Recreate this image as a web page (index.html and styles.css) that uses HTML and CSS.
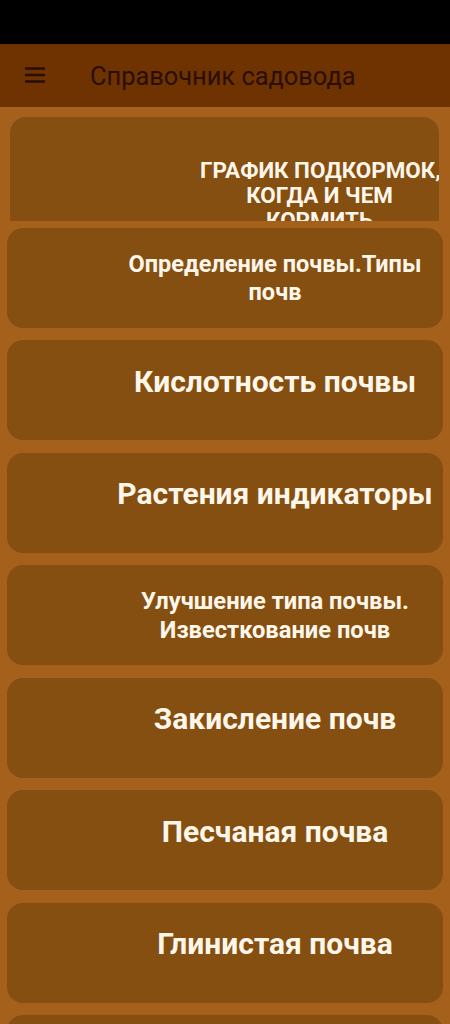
FILE: index.html
```html
<!DOCTYPE html>
<html lang="ru">
<head>
<meta charset="utf-8">
<title>Справочник садовода</title>
<link rel="stylesheet" href="styles.css">
</head>
<body>
<div class="status"></div>
<header class="toolbar">
  <svg class="menu" width="24" height="24" viewBox="0 0 24 24"><path d="M2 6.5h20M2 13h20M2 19.5h20" stroke="#2a0e02" stroke-width="2.6" fill="none"/></svg>
  <h1 class="title">Справочник садовода</h1>
</header>
<main class="list">
  <div class="clip">
    <div class="card card-first">
      <p class="label l-caps">ГРАФИК ПОДКОРМОК,<br>КОГДА И ЧЕМ<br>КОРМИТЬ</p>
    </div>
  </div>
  <div class="card"><p class="label l-two">Определение почвы.Типы<br>почв</p></div>
  <div class="card"><p class="label l-one">Кислотность почвы</p></div>
  <div class="card"><p class="label l-one">Растения индикаторы</p></div>
  <div class="card"><p class="label l-small">Улучшение типа почвы.<br>Известкование почв</p></div>
  <div class="card"><p class="label l-one">Закисление почв</p></div>
  <div class="card"><p class="label l-one">Песчаная почва</p></div>
  <div class="card"><p class="label l-one">Глинистая почва</p></div>
  <div class="card"></div>
</main>
</body>
</html>
```
FILE: styles.css
```css
html, body {
  margin: 0;
  padding: 0;
}
body {
  width: 450px;
  height: 1024px;
  overflow: hidden;
  background: #a5611b;
  font-family: Roboto, "Noto Sans", sans-serif;
}
.status {
  height: 44px;
  background: #000;
}
.toolbar {
  height: 63px;
  background: #6f3301;
  display: flex;
  align-items: center;
  box-sizing: border-box;
  padding-left: 23px;
}
.menu {
  display: block;
  margin-top: -4px;
}
.title {
  margin: 0 0 0 43px;
  font-size: 25.4px;
  font-weight: 400;
  color: #2a0e02;
  line-height: 30px;
}
.list {
  display: flex;
  flex-direction: column;
  gap: 12.45px;
  padding-top: 10px;
}
.clip {
  height: 104px;
  margin: 0 11px -5.45px 10px;
  overflow: hidden;
  flex-shrink: 0;
}
.card {
  flex-shrink: 0;
  height: 100px;
  margin: 0 7px;
  background: #844f11;
  border-radius: 16px;
  box-sizing: border-box;
  padding: 0 0 0 100px;
  color: #fff6ea;
  text-align: center;
}
.card-first {
  height: 140px;
  margin: 0;
  padding-left: 190px;
}
.label {
  margin: 0;
  font-weight: 700;
  white-space: nowrap;
}
.l-caps {
  font-size: 22.4px;
  line-height: 25px;
  padding-top: 40.5px;
}
.l-two {
  font-size: 23.5px;
  line-height: 28px;
  padding-top: 22px;
}
.l-one {
  font-size: 30px;
  line-height: 35px;
  padding-top: 23.5px;
}
.l-small {
  font-size: 23.7px;
  line-height: 28.5px;
  padding-top: 22px;
}
```
